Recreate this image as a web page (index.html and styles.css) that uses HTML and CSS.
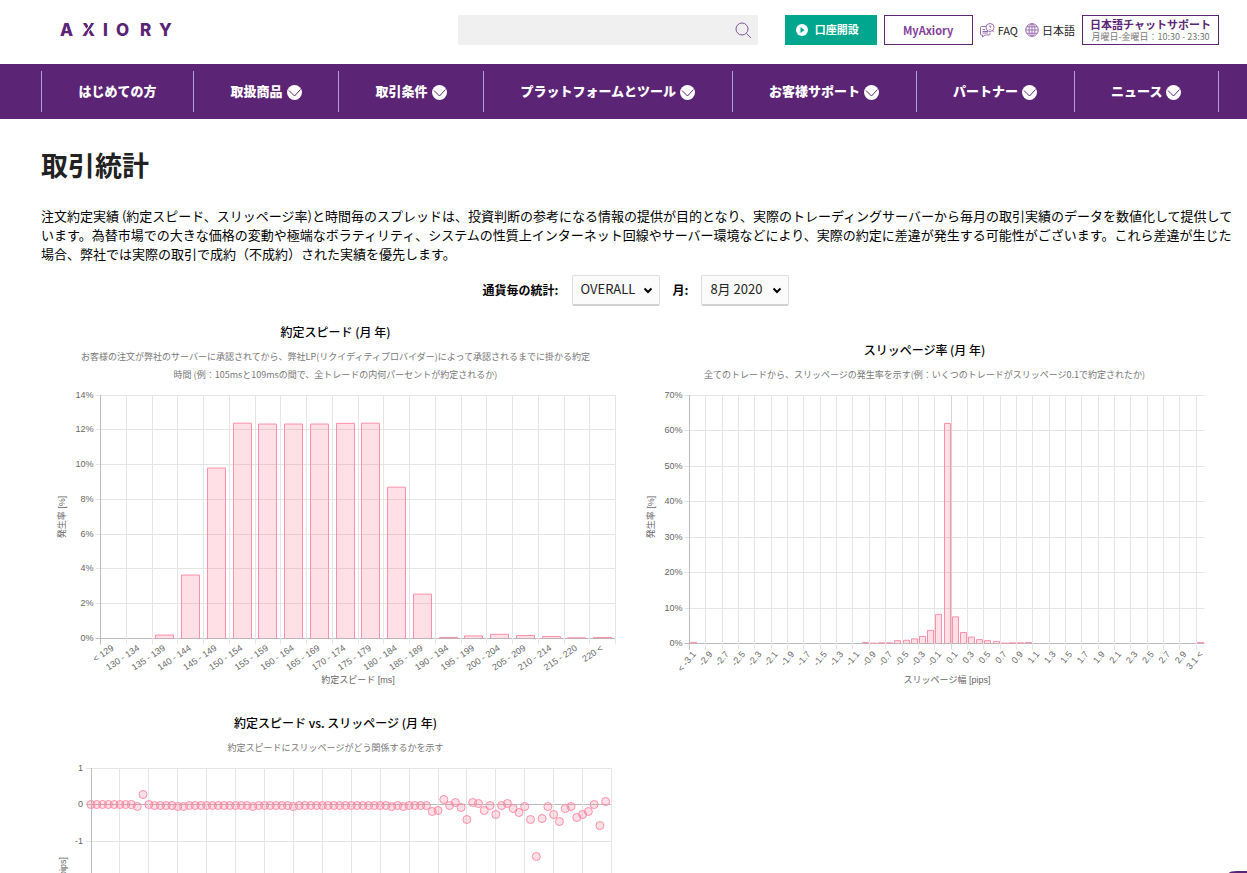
FILE: index.html
```html
<!DOCTYPE html>
<html lang="ja">
<head>
<meta charset="utf-8">
<title>取引統計 | AXIORY</title>
<meta name="viewport" content="width=device-width, initial-scale=1">
<link rel="stylesheet" href="styles.css">
</head>
<body>
<header class="header">
  <a class="logo" href="#" aria-label="AXIORY">
    <svg width="118" height="20" viewBox="0 0 118 20">
      <text class="logo-text" y="16" x="0 22 43 56 80 99">AXIORY</text>
      <path class="logo-cut" d="M25.500 11L30.500 3.500M28 12.500L30.500 9"/>
    </svg>
  </a>
  <form class="search" role="search">
    <input class="search-input" type="text" aria-label="検索">
    <button class="search-button" type="button" aria-label="検索する">
      <svg width="17" height="17" viewBox="0 0 17 17"><circle cx="7" cy="7" r="6"/><path d="M11.500 11.500L16 16"/></svg>
    </button>
  </form>
  <div class="tools">
    <a class="open-account" href="#">
      <svg width="12" height="12" viewBox="0 0 12 12"><circle cx="6" cy="6" r="6" fill="#fff"/><path d="M4.500 3L8.500 6L4.500 9Z" fill="#00a78e"/></svg>
      <span>口座開設</span>
    </a>
    <a class="my-axiory" href="#">MyAxiory</a>
    <a class="tool-link" href="#">
      <svg width="15" height="15" viewBox="0 0 15 15"><path d="M6 3.500H1.500Q.5 3.500 .5 4.500V11Q.5 12 1.500 12H2.500V14L5 12H9Q10 12 10 11V9.500M2.500 6.500H5M2.500 8.500H8M2.500 10H8"/><circle cx="10" cy="4.500" r="4"/><path d="M9 3.500Q10 2 11 3.500Q11 4.200 10 5M10 6V7M12.500 7.500L13.500 9"/></svg>
      <span>FAQ</span>
    </a>
    <a class="tool-link" href="#">
      <svg width="14" height="14" viewBox="0 0 14 14"><circle cx="7" cy="7" r="6.300"/><ellipse cx="7" cy="7" rx="3" ry="6.300"/><path d="M7 .7V13.300M.7 7H13.300M1.600 3.800H12.400M1.600 10.200H12.400"/></svg>
      <span>日本語</span>
    </a>
    <a class="chat-support" href="#">
      <strong>日本語チャットサポート</strong>
      <span>月曜日-金曜日：10:30 - 23:30</span>
    </a>
  </div>
</header>

<nav class="nav">
  <ul class="nav-list">
    <li><a href="#">はじめての方</a></li>
    <li><a href="#">取扱商品<svg class="chevron" viewBox="0 0 15 15"><circle cx="7.500" cy="7.500" r="7.500"/><path d="M2 5.500L7.500 11L13.500 4.500"/></svg></a></li>
    <li><a href="#">取引条件<svg class="chevron" viewBox="0 0 15 15"><circle cx="7.500" cy="7.500" r="7.500"/><path d="M2 5.500L7.500 11L13.500 4.500"/></svg></a></li>
    <li><a href="#">プラットフォームとツール<svg class="chevron" viewBox="0 0 15 15"><circle cx="7.500" cy="7.500" r="7.500"/><path d="M2 5.500L7.500 11L13.500 4.500"/></svg></a></li>
    <li><a href="#">お客様サポート<svg class="chevron" viewBox="0 0 15 15"><circle cx="7.500" cy="7.500" r="7.500"/><path d="M2 5.500L7.500 11L13.500 4.500"/></svg></a></li>
    <li><a href="#">パートナー<svg class="chevron" viewBox="0 0 15 15"><circle cx="7.500" cy="7.500" r="7.500"/><path d="M2 5.500L7.500 11L13.500 4.500"/></svg></a></li>
    <li><a href="#">ニュース<svg class="chevron" viewBox="0 0 15 15"><circle cx="7.500" cy="7.500" r="7.500"/><path d="M2 5.500L7.500 11L13.500 4.500"/></svg></a></li>
  </ul>
</nav>

<main class="page">
  <h1>取引統計</h1>
  <p class="intro">注文約定実績 (約定スピード、スリッページ率)と時間毎のスプレッドは、投資判断の参考になる情報の提供が目的となり、実際のトレーディングサーバーから毎月の取引実績のデータを数値化して提供しています。為替市場での大きな価格の変動や極端なボラティリティ、システムの性質上インターネット回線やサーバー環境などにより、実際の約定に差違が発生する可能性がございます。これら差違が生じた場合、弊社では実際の取引で成約（不成約）された実績を優先します。</p>

  <div class="content">
    <form class="filters">
      <label for="symbol">通貨毎の統計:</label>
      <span class="select-box">
        <select id="symbol" class="select"><option>OVERALL</option></select>
        <svg class="arrow" viewBox="0 0 10 7"><path d="M1.500 1.500L5 5L8.500 1.500"/></svg>
      </span>
      <label for="month">月:</label>
      <span class="select-box">
        <select id="month" class="select"><option>8月 2020</option></select>
        <svg class="arrow" viewBox="0 0 10 7"><path d="M1.500 1.500L5 5L8.500 1.500"/></svg>
      </span>
    </form>

    <section class="charts">
      <figure class="chart">
        <figcaption>
          <h2>約定スピード (月 年)</h2>
          <p>お客様の注文が弊社のサーバーに承認されてから、弊社LP(リクイディティプロバイダー)によって承認されるまでに掛かる約定<br>時間 (例：105msと109msの間で、全トレードの内何パーセントが約定されるか)</p>
        </figcaption>
        <svg id="speed-chart" class="plot" viewBox="0 0 589 305"></svg>
      </figure>
      <figure class="chart">
        <figcaption>
          <h2>スリッページ率 (月 年)</h2>
          <p>全てのトレードから、スリッページの発生率を示す(例：いくつのトレードがスリッページ0.1で約定されたか)</p>
        </figcaption>
        <svg id="slippage-chart" class="plot" viewBox="0 0 589 305"></svg>
      </figure>
      <figure class="chart">
        <figcaption>
          <h2>約定スピード vs. スリッページ (月 年)</h2>
          <p>約定スピードにスリッページがどう関係するかを示す</p>
        </figcaption>
        <svg id="scatter-chart" class="plot" viewBox="0 0 589 170"></svg>
      </figure>
    </section>
  </div>
</main>
<button class="chat-tab" type="button" aria-label="チャット"></button>
<script src="charts.js"></script>
</body>
</html>
```

FILE: styles.css
```css
* { box-sizing: border-box; }

body {
  margin: 0;
  background: #fff;
  color: #000;
  font-family: "Noto Sans CJK JP", "Noto Sans", sans-serif;
  font-size: 13px;
}

a { color: inherit; text-decoration: none; }
h1, h2, p, ul, figure { margin: 0; padding: 0; }

.header {
  display: flex;
  align-items: center;
  height: 64px;
  padding: 0 28px 4px 60px;
}

.logo { display: flex; margin-right: auto; }
.logo-text { font-family: Inter, sans-serif; font-size: 17px; font-weight: 800; fill: #5b2475; }
.logo-cut { stroke: #fff; stroke-width: 1; fill: none; }

.search { display: flex; width: 300px; height: 30px; margin-right: 27px; background: #f0f0f0; }
.search-input { flex: 1; min-width: 0; padding: 0 10px; border: 0; background: none; outline: 0; }
.search-button { display: flex; align-items: center; padding: 0 6px 0 0; border: 0; background: none; }
.search-button svg { fill: none; stroke: #83559a; stroke-width: 1; }

.tools { display: flex; align-items: center; gap: 7px; white-space: nowrap; }

.open-account {
  display: flex;
  align-items: center;
  gap: 7px;
  width: 92px;
  height: 30px;
  padding: 0 11px 2px;
  background: #00a78e;
  color: #fff;
  font-size: 11px;
  font-weight: 700;
}
.open-account svg { margin-top: 2px; }

.my-axiory {
  width: 89px;
  height: 30px;
  border: 1px solid #5b2475;
  color: #83409a;
  font-size: 11px;
  font-weight: 700;
  line-height: 28px;
  text-align: center;
}

.tool-link { display: flex; align-items: center; gap: 3px; color: #222; font-size: 11px; line-height: 16px; }
.tool-link svg { fill: none; stroke: #9a6cae; stroke-width: 1; }

.chat-support {
  display: flex;
  flex-direction: column;
  align-items: center;
  width: 137px;
  height: 30px;
  padding-top: 1px;
  border: 1px solid #5b2475;
}
.chat-support strong { color: #5b2475; font-size: 11px; line-height: 15px; }
.chat-support span { color: #777; font-size: 9px; line-height: 10px; }

.nav { padding: 7px 28px 7px 41px; background: #5b2475; }
.nav-list { display: flex; list-style: none; border-left: 1px solid #a9a4e0; }
.nav-list li { flex: 1 1 auto; border-right: 1px solid #a9a4e0; }
.nav-list a {
  display: flex;
  align-items: center;
  justify-content: center;
  gap: 4px;
  height: 41px;
  padding-bottom: 2px;
  color: #fff;
  font-weight: 900;
  white-space: nowrap;
}
.chevron { width: 15px; height: 15px; margin-top: 4px; }
.chevron circle { fill: #fff; }
.chevron path { fill: none; stroke: #5b2475; stroke-width: 1; }

.page { padding: 26px 11px 0 41px; }
.page h1 { color: #222; font-size: 27px; font-weight: 700; line-height: 40px; }
.intro { margin-top: 21px; line-height: 19px; }
.content { padding-right: 17px; }

.filters {
  display: flex;
  align-items: center;
  justify-content: center;
  gap: 13px;
  margin: 12px 0 17px;
  padding-left: 12px;
  font-size: 12px;
  font-weight: 700;
}
.filters label { padding-bottom: 2px; }
.select-box { position: relative; display: flex; }
.select {
  width: 88px;
  height: 31px;
  padding: 0 8px 3px;
  border: 1px solid #ddd;
  border-bottom: 2px solid #d2d2d2;
  border-radius: 2px;
  background: #fbfbfb;
  color: #222;
  font: 13px "Noto Sans CJK JP", sans-serif;
  appearance: none;
}
.arrow {
  position: absolute;
  right: 7px;
  top: 12px;
  width: 10px;
  height: 7px;
  fill: none;
  stroke: #000;
  stroke-width: 2;
  pointer-events: none;
}

.charts { display: grid; grid-template-columns: repeat(2, minmax(0, 1fr)); row-gap: 24px; align-items: end; }
.chart { text-align: center; }
.chart h2 { font-size: 12px; font-weight: 500; line-height: 18px; }
.chart p { margin: 7px 0 1px; color: #777; font-size: 9px; line-height: 18px; }

.plot { display: block; width: 100%; height: auto; }
.plot text { fill: #666; font-family: "Liberation Sans", "Noto Sans CJK JP", sans-serif; font-size: 9px; }
.grid-line { stroke: #e5e5e5; stroke-width: 1; }
.zero-line { stroke: #d5d5d5; stroke-width: 1; }
.axis-line { stroke: #bbb; stroke-width: 1; }
.bar { fill: rgba(255, 99, 132, 0.2); stroke: #ff8fa9; stroke-width: 1; }
.dot { fill: rgba(255, 99, 132, 0.2); stroke: #ff8fa9; stroke-width: 1; }

.chat-tab {
  position: fixed;
  right: 0;
  bottom: 0;
  width: 18px;
  height: 2px;
  padding: 0;
  border: 0;
  border-top-left-radius: 8px 2px;
  background: #5b2475;
}
```

FILE: charts.js
```js
const NS = "http://www.w3.org/2000/svg";

function add(svg, name, attrs, text) {
  const node = document.createElementNS(NS, name);
  for (const key in attrs) node.setAttribute(key, attrs[key]);
  if (text !== undefined) node.textContent = text;
  svg.appendChild(node);
}

function line(svg, x1, y1, x2, y2, cls) {
  add(svg, "line", { x1, y1, x2, y2, class: cls });
}

function turned(svg, x, y, angle, anchor, text) {
  add(svg, "text", { x, y, "text-anchor": anchor, transform: `rotate(${angle} ${x} ${y})` }, text);
}

function snap(v) { return Math.floor(v) + 0.5; }

function barChart(id, o) {
  const svg = document.getElementById(id);
  const step = (o.right - o.left) / o.values.length;
  for (let t = 0; t <= o.max; t += o.tick) {
    const y = snap(o.bottom - (o.bottom - o.top) * t / o.max);
    line(svg, o.left - 5, y, o.right, y, t === 0 ? "axis-line" : "grid-line");
    add(svg, "text", { x: o.left - 7, y: y + 2, "text-anchor": "end" }, t + "%");
  }
  for (let i = 0; i <= o.values.length; i += o.every) {
    const x = snap(o.left + i * step);
    const cls = i === 0 ? "axis-line" : i === o.zero ? "zero-line" : "grid-line";
    line(svg, x, o.top, x, o.bottom + 6, cls);
  }
  o.values.forEach((v, i) => {
    if (v) {
      const h = v / o.max * (o.bottom - o.top);
      const x = snap(o.left + (i + 0.5) * step - o.barWidth / 2);
      const y = o.bottom - h;
      add(svg, "path", { class: "bar", d: `M${x} ${o.bottom}V${y}H${x + o.barWidth}V${o.bottom}` });
    }
    if (i % o.every === 0) turned(svg, o.left + (i + 0.5) * step + o.labelShift, o.bottom + 11, o.angle, "end", o.label(i));
  });
  turned(svg, o.yTitleX, 132, -90, "middle", "発生率 [%]");
  add(svg, "text", { x: (o.left + o.right) / 2, y: 298, "text-anchor": "middle" }, o.xTitle);
}

barChart("speed-chart", {
  left: 59.5, right: 574.5, top: 10, bottom: 253.5, max: 14, tick: 2, every: 1,
  barWidth: 18, angle: -34, labelShift: 1, yTitleX: 24, xTitle: "約定スピード [ms]",
  values: [0, 0, 0.2, 3.65, 9.8, 12.38, 12.33, 12.33, 12.33, 12.37, 12.38, 8.7, 2.55, 0.06, 0.15, 0.24, 0.17, 0.11, 0.04, 0.06],
  label: i => i === 0 ? "< 129" : i === 18 ? "215 - 220" : i === 19 ? "220 <" : `${125 + i * 5} - ${129 + i * 5}`
});

const slippage = new Array(63).fill(0);
Object.entries({
  0: 0.3, 21: 0.3, 22: 0.1, 23: 0.2, 24: 0.2, 25: 0.8, 26: 0.9, 27: 1.3, 28: 2, 29: 3.7, 30: 8.2,
  31: 62, 32: 7.5, 33: 3.1, 34: 1.8, 35: 1.1, 36: 0.8, 37: 0.6, 38: 0.1, 39: 0.2, 40: 0.2, 41: 0.3, 62: 0.3
}).forEach(([i, v]) => { slippage[i] = v; });

barChart("slippage-chart", {
  left: 59.5, right: 574.5, top: 10, bottom: 258.5, max: 70, tick: 10, every: 2, zero: 32,
  barWidth: 6, angle: -50, labelShift: 3, yTitleX: 24, xTitle: "スリッページ幅 [pips]",
  values: slippage,
  label: i => i === 0 ? "< -3.1" : i === 62 ? "3.1 <" : ((i - 31) / 10).toFixed(1)
});

(function scatterChart() {
  const svg = document.getElementById("scatter-chart");
  const left = 50, right = 570.5, zero = 46.5, unit = 36.5;
  for (let t = 1; t >= -1; t--) {
    const y = snap(zero - t * unit);
    line(svg, left - 5, y, right, y, t === 0 ? "axis-line" : "grid-line");
    add(svg, "text", { x: left - 8, y: y + 2, "text-anchor": "end" }, t);
  }
  for (let i = 0; i <= 18; i++) {
    const x = snap(left + i * (right - left) / 18);
    line(svg, x, 10, x, 170, i === 0 ? "axis-line" : "grid-line");
  }
  const offsets = new Array(59).fill(1);
  [0, 1, 2, 3, 4, 5, 6, 7, 10].forEach(i => { offsets[i] = 0; });
  [8, 15, 16, 28, 35, 52, 54].forEach(i => { offsets[i] = 2; });
  offsets[9] = -10;
  offsets.push(7, 6, -5, 1, -2, 3, 15, -2, -1, 6, 1, 10, 1, -1, 4, 8, 2, 15, 52, 14, 2, 10, 17, 4, 2, 13, 10, 7, 0, 21, -3);
  offsets.forEach((d, i) => {
    add(svg, "circle", { class: "dot", cx: left + i * (right - left) / 90, cy: zero + d, r: 4 });
  });
  turned(svg, 25, 99, -90, "end", "スリッページ [pips]");
})();
```
